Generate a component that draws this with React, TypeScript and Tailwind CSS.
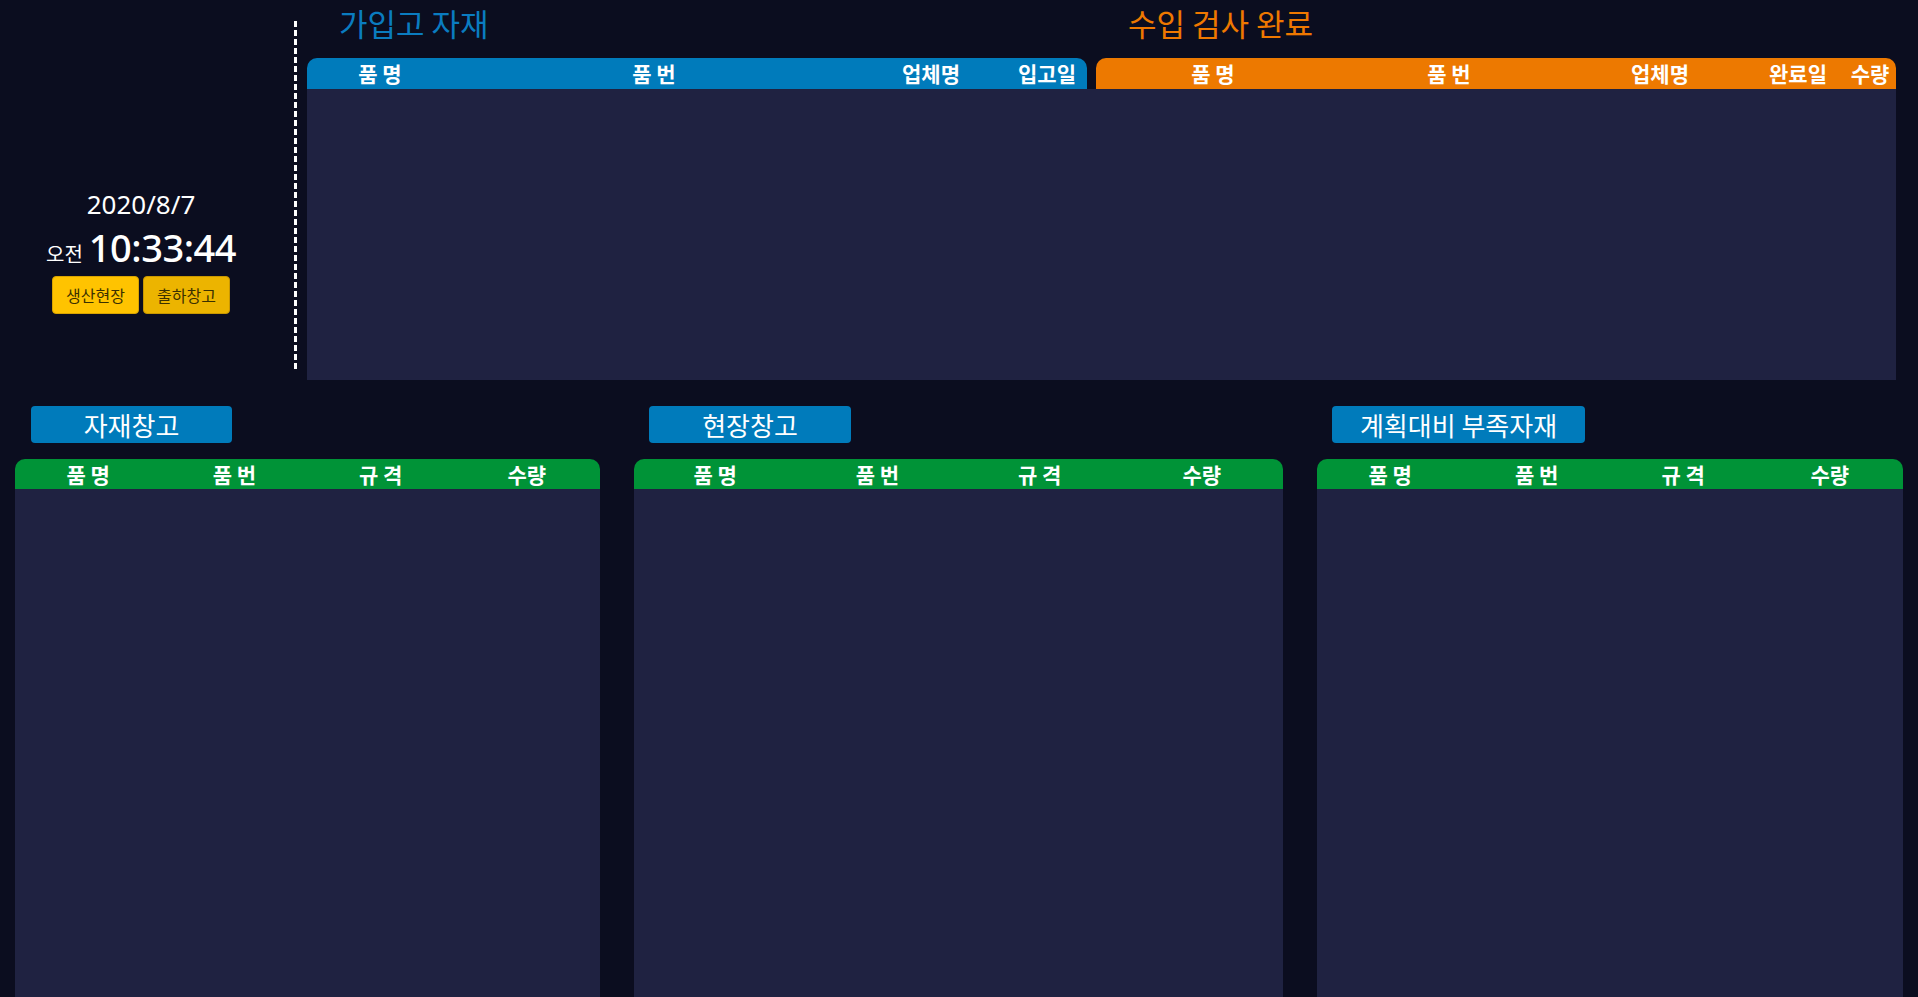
const inboundCols = [
  { label: "품 명", width: "w-[146px]" },
  { label: "품 번", width: "w-[402px]" },
  { label: "업체명", width: "w-[152px]" },
  { label: "입고일", width: "w-[80px]" },
];

const inspectCols = [
  { label: "품 명", width: "w-[234px]" },
  { label: "품 번", width: "w-[238px]" },
  { label: "업체명", width: "w-[184px]" },
  { label: "완료일", width: "w-[92px]" },
  { label: "수량", width: "w-[52px]" },
];

const stockCols = ["품 명", "품 번", "규 격", "수량"];

const warehouses = [
  { title: "자재창고", width: "w-[585px]", tag: "w-[201px] ml-[16px]" },
  { title: "현장창고", width: "w-[649px]", tag: "w-[202px] ml-[15px]" },
  { title: "계획대비 부족자재", width: "w-[586px]", tag: "w-[253px] ml-[15px]" },
];

function Clock() {
  return (
    <div className="flex w-[282px] shrink-0 flex-col items-center pt-[187px] font-['Noto_Sans','Noto_Sans_CJK_KR',sans-serif] text-white">
      <div className="text-[26px] leading-[34px]">2020/8/7</div>
      <div className="mt-[4px] flex items-baseline gap-[6px] leading-[44px]">
        <span className="font-['Noto_Sans_CJK_KR',sans-serif] text-[20px]">오전</span>
        <span className="text-[38px] font-medium tracking-[-0.5px]">10:33:44</span>
      </div>
      <div className="flex gap-[4px] font-['Noto_Sans_CJK_KR',sans-serif] text-[16px] text-[#3a3000]">
        <button className="flex h-[38px] w-[87px] items-center justify-center rounded-[4px] border border-[#d9a300] bg-[#ffc300]">
          생산현장
        </button>
        <button className="flex h-[38px] w-[87px] items-center justify-center rounded-[4px] border border-[#c99700] bg-[#ecb400]">
          출하창고
        </button>
      </div>
    </div>
  );
}

export default function App() {
  return (
    <div className="flex h-screen w-full flex-col overflow-hidden bg-[#0b0d1f] font-['Noto_Sans_CJK_KR',sans-serif]">
      {/* Top: clock + incoming / inspection tables */}
      <div className="flex h-[380px] shrink-0">
        <Clock />
        <div className="ml-[12px] mt-[21px] h-[351px] w-[3px] shrink-0 bg-[repeating-linear-gradient(to_bottom,#ffffff_0px,#ffffff_6px,transparent_6px,transparent_9px)]" />
        <div className="ml-[10px] flex w-[1589px] flex-col">
          <div className="flex h-[58px]">
            <div className="w-[789px] pl-[32px] text-[31px] leading-[45px] text-[#0a7cc0]">가입고 자재</div>
            <div className="pl-[32px] text-[31px] leading-[45px] text-[#ef7800]">수입 검사 완료</div>
          </div>
          <div className="flex gap-[9px] text-[21px] font-bold leading-[31px] text-white">
            <div className="flex h-[31px] w-[780px] rounded-t-[10px] bg-[#007bbb]">
              {inboundCols.map((c) => (
                <div key={c.label} className={`${c.width} text-center`}>
                  {c.label}
                </div>
              ))}
            </div>
            <div className="flex h-[31px] w-[800px] rounded-t-[10px] bg-[#ed7900]">
              {inspectCols.map((c) => (
                <div key={c.label} className={`${c.width} text-center`}>
                  {c.label}
                </div>
              ))}
            </div>
          </div>
          <div className="flex-1 bg-[#1f2241]" />
        </div>
      </div>

      {/* Bottom: warehouse panels */}
      <div className="flex min-h-0 flex-1 gap-[34px] pl-[15px] pt-[26px]">
        {warehouses.map((w) => (
          <div key={w.title} className={`flex ${w.width} shrink-0 flex-col`}>
            <div
              className={`${w.tag} flex h-[37px] items-center justify-center rounded-[4px] bg-[#007bbb] text-[26px] text-white`}
            >
              {w.title}
            </div>
            <div className="mt-[16px] grid h-[30px] grid-cols-4 rounded-t-[10px] bg-[#009337] text-[21px] font-bold leading-[30px] text-white">
              {stockCols.map((c) => (
                <div key={c} className="text-center">
                  {c}
                </div>
              ))}
            </div>
            <div className="flex-1 bg-[#1f2241]" />
          </div>
        ))}
      </div>
    </div>
  );
}
